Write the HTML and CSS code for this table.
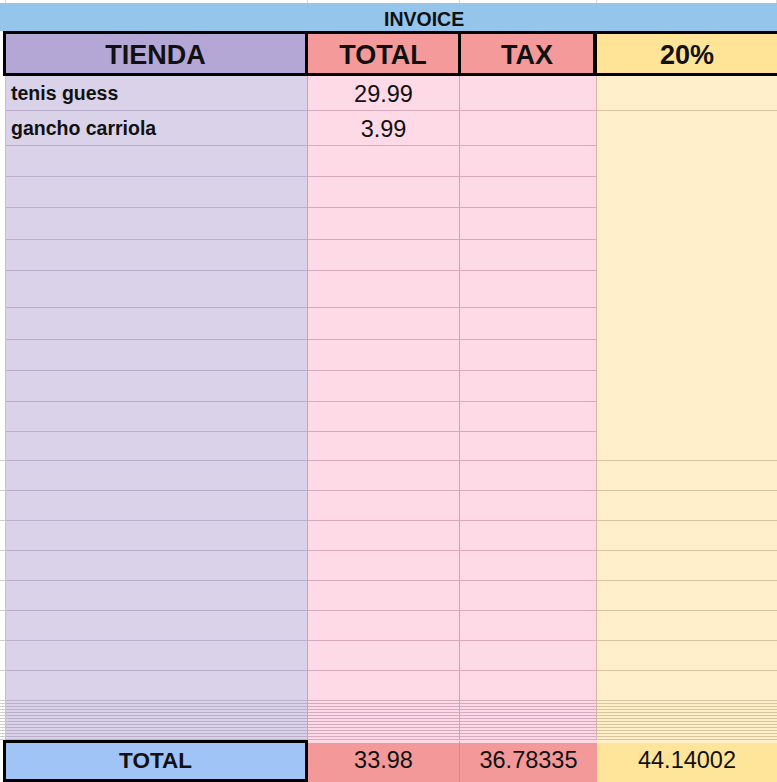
FILE: index.html
```html
<!DOCTYPE html>
<html>
<head>
<meta charset="utf-8">
<title>Invoice</title>
<link rel="stylesheet" href="styles.css">
</head>
<body>
<div class="sheet">
  <div class="strip"><div></div><div></div><div></div><div></div><div></div></div>
  <div class="title">INVOICE</div>
  <div class="head">
    <div class="hg"></div>
    <div class="hc h-a">TIENDA</div>
    <div class="hc h-b">TOTAL</div>
    <div class="hc h-c">TAX</div>
    <div class="hc h-d">20%</div>
  </div>
  <div class="body">
    <div class="merge"></div>
    <!-- 1 -->
    <div class="g"></div><div class="a txt">tenis guess</div><div class="b num">29.99</div><div class="c"></div><div class="d"></div>
    <!-- 2 -->
    <div class="g"></div><div class="a txt">gancho carriola</div><div class="b num">3.99</div><div class="c"></div>
    <!-- 3-11 -->
    <div class="g"></div><div class="a"></div><div class="b"></div><div class="c"></div>
    <div class="g"></div><div class="a"></div><div class="b"></div><div class="c"></div>
    <div class="g"></div><div class="a"></div><div class="b"></div><div class="c"></div>
    <div class="g"></div><div class="a"></div><div class="b"></div><div class="c"></div>
    <div class="g"></div><div class="a"></div><div class="b"></div><div class="c"></div>
    <div class="g"></div><div class="a"></div><div class="b"></div><div class="c"></div>
    <div class="g"></div><div class="a"></div><div class="b"></div><div class="c"></div>
    <div class="g"></div><div class="a"></div><div class="b"></div><div class="c"></div>
    <div class="g"></div><div class="a"></div><div class="b"></div><div class="c"></div>
    <!-- 12 -->
    <div class="g gl"></div><div class="a"></div><div class="b"></div><div class="c"></div>
    <!-- 13-20 -->
    <div class="g gl"></div><div class="a"></div><div class="b"></div><div class="c"></div><div class="d"></div>
    <div class="g gl"></div><div class="a"></div><div class="b"></div><div class="c"></div><div class="d"></div>
    <div class="g gl"></div><div class="a"></div><div class="b"></div><div class="c"></div><div class="d"></div>
    <div class="g gl"></div><div class="a"></div><div class="b"></div><div class="c"></div><div class="d"></div>
    <div class="g gl"></div><div class="a"></div><div class="b"></div><div class="c"></div><div class="d"></div>
    <div class="g gl"></div><div class="a"></div><div class="b"></div><div class="c"></div><div class="d"></div>
    <div class="g gl"></div><div class="a"></div><div class="b"></div><div class="c"></div><div class="d"></div>
    <div class="g gl"></div><div class="a"></div><div class="b"></div><div class="c"></div><div class="d"></div>
    <!-- dense hidden rows -->
    <div class="g gl"></div><div class="a"></div><div class="b"></div><div class="c"></div><div class="d"></div>
    <div class="g gl"></div><div class="a"></div><div class="b"></div><div class="c"></div><div class="d"></div>
    <div class="g gl"></div><div class="a"></div><div class="b"></div><div class="c"></div><div class="d"></div>
    <div class="g gl"></div><div class="a"></div><div class="b"></div><div class="c"></div><div class="d"></div>
    <div class="g gl"></div><div class="a"></div><div class="b"></div><div class="c"></div><div class="d"></div>
    <div class="g gl"></div><div class="a"></div><div class="b"></div><div class="c"></div><div class="d"></div>
    <div class="g gl"></div><div class="a"></div><div class="b"></div><div class="c"></div><div class="d"></div>
    <div class="g gl"></div><div class="a"></div><div class="b"></div><div class="c"></div><div class="d"></div>
    <div class="g gl"></div><div class="a"></div><div class="b"></div><div class="c"></div><div class="d"></div>
    <div class="g gl"></div><div class="a"></div><div class="b"></div><div class="c"></div><div class="d"></div>
    <div class="g gl"></div><div class="a"></div><div class="b"></div><div class="c"></div><div class="d"></div>
    <div class="g gl"></div><div class="a"></div><div class="b"></div><div class="c"></div><div class="d"></div>
    <div class="g gl"></div><div class="a"></div><div class="b"></div><div class="c"></div><div class="d"></div>
  </div>
  <div class="foot">
    <div class="fg"></div>
    <div class="f-a">TOTAL</div>
    <div class="f-b fnum">33.98</div>
    <div class="f-c fnum">36.78335</div>
    <div class="f-d fnum">44.14002</div>
  </div>
</div>
</body>
</html>
```

FILE: styles.css
```css
* {
  box-sizing: border-box;
  margin: 0;
  padding: 0;
}

html, body {
  background: #ffffff;
}

body {
  width: 777px;
  height: 782px;
  overflow: hidden;
  font-family: "Liberation Sans", Arial, sans-serif;
  color: #111111;
}

.sheet {
  display: flex;
  flex-direction: column;
  width: 777px;
}

.strip {
  display: grid;
  grid-template-columns: 6px 302px 152px 137px 180px;
  height: 3px;
}

.strip > div {
  border-right: 1px solid #d6d6d6;
}

.title {
  height: 28px;
  background: #96c5ec;
  display: flex;
  align-items: flex-end;
  padding: 0 0 2px 384px;
  font-weight: bold;
  font-size: 19.5px;
  line-height: 20px;
}

.head {
  display: grid;
  grid-template-columns: 3px 305px 153px 136px 180px;
  height: 45px;
}

.hc {
  border-top: 3px solid #000;
  border-bottom: 3px solid #000;
  display: flex;
  align-items: center;
  justify-content: center;
  padding-top: 2px;
  font-weight: bold;
  font-size: 27px;
  line-height: 30px;
}

.h-a {
  background: #b4a7d6;
  border-left: 3px solid #000;
  border-right: 3px solid #000;
}

.h-b {
  background: #f49a9a;
  border-right: 3px solid #000;
}

.h-c {
  background: #f49a9a;
  border-right: 4px solid #000;
}

.h-d {
  background: #ffe498;
}

.body {
  display: grid;
  grid-template-columns: 6px 302px 152px 137px 180px;
  grid-template-rows: 35px 35px 31px 31px 32px 31px 37px 32px 31px 31px 30px 29px repeat(8, 30px) repeat(13, 3px);
}

.g {
  border-right: 1px solid #c4c4c4;
}

.gl {
  border-bottom: 1px solid #cfcfcf;
}

.a {
  background: #d9d2e9;
  border-right: 1px solid #b6a9c4;
  border-bottom: 1px solid #b9afcc;
}

.b {
  background: #fed9e6;
  border-right: 1px solid #cfa3b6;
  border-bottom: 1px solid #d6a9bc;
}

.c {
  background: #fed9e6;
  border-right: 1px solid #dab4a6;
  border-bottom: 1px solid #d6a9bc;
}

.d {
  background: #fff0cb;
  border-bottom: 1px solid #d8c59e;
}

.merge {
  grid-column: 5;
  grid-row: 2 / 13;
  background: #fff0cb;
  border-bottom: 1px solid #d8c59e;
}

.txt {
  display: flex;
  align-items: flex-end;
  padding: 0 0 7px 5px;
  font-weight: bold;
  font-size: 19.5px;
  line-height: 20px;
}

.num {
  display: flex;
  align-items: flex-end;
  justify-content: center;
  padding-bottom: 4px;
  font-size: 23.5px;
  line-height: 24px;
}

.foot {
  display: grid;
  grid-template-columns: 3px 305px 152px 137px 180px;
  height: 42px;
}

.f-a {
  background: #a0c4f6;
  border: 3px solid #000;
  display: flex;
  align-items: center;
  justify-content: center;
  font-weight: bold;
  font-size: 22.5px;
  line-height: 24px;
}

.fnum {
  display: flex;
  align-items: center;
  justify-content: center;
  padding-bottom: 5px;
  font-size: 23.5px;
  line-height: 24px;
}

.f-b,
.f-c {
  background: #f49999;
  border-top: 3px solid #fed9e6;
}

.f-b {
  border-right: 1px solid #d88a8a;
}

.f-d {
  background: #ffe599;
  border-top: 3px solid #fff0cb;
}
```
